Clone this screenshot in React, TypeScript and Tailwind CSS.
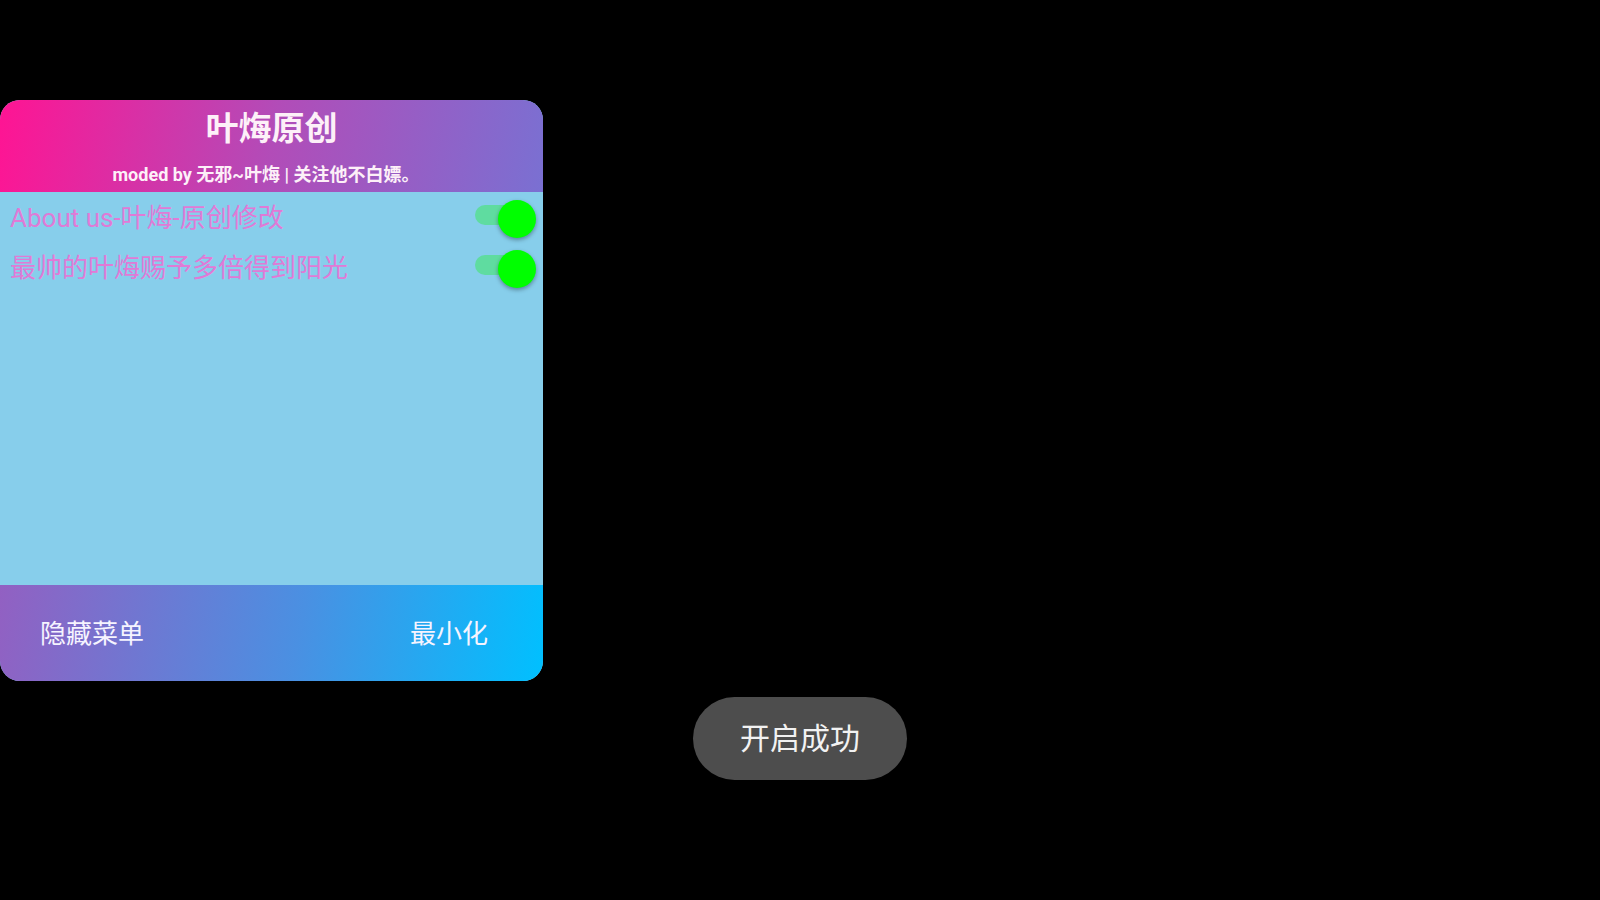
import React from "react";

const cjk = { fontFamily: 'Roboto, "Noto Sans CJK SC", "Noto Sans", sans-serif' };

function Toggle() {
  return (
    <div className="relative w-[62px] h-[40px] shrink-0">
      <div className="absolute left-0 top-[7px] w-[55px] h-[20px] rounded-full bg-[#5fdca0]" />
      <div className="absolute left-[23px] top-[2px] w-[38px] h-[38px] rounded-full bg-[#00ff00] shadow-[0_2px_4px_rgba(0,0,0,0.35)]" />
    </div>
  );
}

const rows = ["About us-叶烸-原创修改", "最帅的叶烸赐予多倍得到阳光"];

export default function App() {
  return (
    <div className="relative w-full h-[900px] bg-black overflow-hidden" style={cjk}>
      <div className="pt-[100px]">
        <div className="w-[543px] h-[581px] rounded-[20px] overflow-hidden flex flex-col bg-[#87ceeb]">
          <div className="h-[92px] shrink-0 flex flex-col items-center pt-[9px] bg-[linear-gradient(100deg,#ff1493_0%,#b24cb8_50%,#7a70d2_100%)] text-[#fdf0f8]">
            <div className="text-[33px] leading-[40px] font-bold">叶烸原创</div>
            <div className="mt-[14px] mr-[11px] text-[18px] leading-[24px] font-bold">
              moded by 无邪~叶烸 | 关注他不白嫖。
            </div>
          </div>
          <div className="flex-1 flex flex-col pt-[1px]">
            {rows.map((r) => (
              <div key={r} className="h-[50px] flex items-center justify-between pl-[10px] pr-[6px]">
                <span className="text-[26px] leading-none text-[#e07ad6]">{r}</span>
                <Toggle />
              </div>
            ))}
          </div>
          <div className="h-[96px] shrink-0 flex items-center justify-between pl-[40px] pr-[55px] pt-[2px] bg-[linear-gradient(100deg,#9260c2_0%,#4a90e2_55%,#00c0ff_100%)] text-[#f6f4ff]">
            <span className="text-[26px] leading-none">隐藏菜单</span>
            <span className="text-[26px] leading-none">最小化</span>
          </div>
        </div>
      </div>
      <div className="absolute left-[693px] top-[697px] w-[214px] h-[83px] rounded-full bg-[#4d4d4d] flex items-center justify-center">
        <span className="text-[30px] leading-none text-[#f2f2f2]">开启成功</span>
      </div>
    </div>
  );
}
